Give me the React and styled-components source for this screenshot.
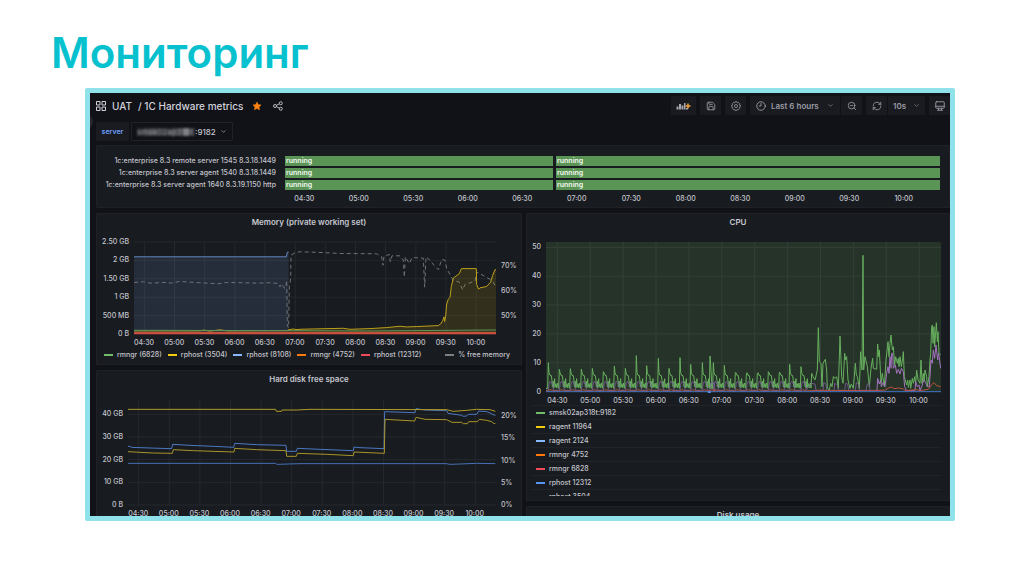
import React from "react";
import styled, { createGlobalStyle } from "styled-components";
import { ChevronDown, RefreshCw, Save, ZoomOut } from "lucide-react";

const GlobalStyle = createGlobalStyle`
  * { box-sizing: border-box; }
  body { margin: 0; background: #fff; font-family: Inter, "Liberation Sans", sans-serif; }
  button, select { font: inherit; color: inherit; }
`;

const Slide = styled.main`
  padding: 31px 69px 40px 85px;
`;

const SlideTitle = styled.h1`
  margin: 0 0 13px -34px;
  font-size: 42px;
  line-height: 44px;
  font-weight: 600;
  color: #08c1cf;
`;

const Frame = styled.section`
  position: relative;
  aspect-ratio: 870 / 433;
  overflow: hidden;
  border: 5px solid #8fe2ea;
  border-radius: 2px;
  background: #111217;
  color: #c3c4cd;
  padding: 3px 0 0 6px;
  font-size: 7px;
  font-weight: 500;
  line-height: 10px;
`;

const MenuToggle = styled.button`
  position: absolute;
  left: -14px;
  top: 20px;
  width: 17px;
  height: 17px;
  padding: 0;
  border: 0;
  border-radius: 50%;
  background: #25272d;
`;

const Toolbar = styled.header`
  display: flex;
  align-items: center;
  height: 19px;
  gap: 4px;
`;

const Breadcrumb = styled.nav`
  display: flex;
  align-items: center;
  gap: 6px;
  margin-right: auto;
  font-size: 10px;
  color: #d0d1da;
  a { color: inherit; text-decoration: none; }
`;

const IconButton = styled.button`
  display: flex;
  align-items: center;
  justify-content: center;
  padding: 0;
  border: 0;
  background: none;
  color: #b9bac3;
  margin-left: ${(p) => p.$space || 0}px;
`;

const ToolGroup = styled.div`
  display: flex;
  height: 19px;
  gap: 1px;
`;

const ToolButton = styled.button`
  display: flex;
  align-items: center;
  justify-content: ${(p) => (p.$start ? "flex-start" : "center")};
  gap: 5px;
  width: ${(p) => p.$width || 21}px;
  height: 19px;
  padding: 0 ${(p) => (p.$start ? 6 : 0)}px;
  border: 0;
  border-radius: 1px;
  background: #191b20;
  color: #9b9ca5;
  font-size: 8px;
  font-weight: 600;
  white-space: nowrap;
  svg:last-child:not(:first-child) { margin-left: auto; }
`;

const SelectBox = styled.label`
  display: flex;
  align-items: center;
  height: 19px;
  padding: 0 5px;
  border: ${(p) => (p.$outlined ? "1px solid #202228" : "0")};
  border-radius: 1px;
  background: ${(p) => (p.$outlined ? "#111217" : "#191b20")};
  color: ${(p) => (p.$outlined ? "#c3c4cd" : "#9b9ca5")};
  font-size: 8px;
  font-weight: ${(p) => (p.$outlined ? 500 : 600)};
  select {
    appearance: none;
    border: 0;
    padding: 0;
    margin: 0 3px 0 0;
    background: transparent;
    width: ${(p) => p.$width}px;
  }
`;

const Variables = styled.div`
  display: flex;
  gap: 2px;
  margin: 7px 0 4px;
`;

const VariableName = styled.span`
  display: flex;
  align-items: center;
  justify-content: center;
  width: 33px;
  height: 19px;
  background: #191b20;
  color: #6e9fff;
  font-weight: 600;
`;

const Hidden = styled.span`
  width: 58px;
  filter: blur(1px);
  color: #96979e;
  background: linear-gradient(90deg, #24262b 0 12%, #38393e 12% 36%, #2a2c31 36% 60%, #3c3d42 60% 80%, #707176 80% 90%, #36373c 90%);
  line-height: 8px;
  height: 8px;
  white-space: nowrap;
`;

const Panel = styled.section`
  border: 1px solid #1f2126;
  border-radius: 1px;
  background: #181b1f;
  padding: 2px 0 ${(p) => p.$bottom || 0}px;
  overflow: hidden;
`;

const PanelTitle = styled.h2`
  margin: 0 0 13px;
  font-size: 8px;
  line-height: 13px;
  font-weight: 600;
  text-align: center;
  color: #c6c7d0;
`;

const Columns = styled.div`
  display: grid;
  grid-template-columns: 426fr 424fr;
  gap: 4px;
  margin-top: 5px;
`;

const Column = styled.div`
  display: flex;
  flex-direction: column;
  gap: 5px;
  min-width: 0;
`;

const StatePanel = styled(Panel)`
  padding: 10px 9px 3px 4px;
`;

const StateGrid = styled.div`
  display: grid;
  grid-template-columns: 184px 1fr;
`;

const StateRows = styled.div`
  display: flex;
  flex-direction: column;
  gap: 2px;
  min-width: 0;
`;

const StateName = styled.span`
  display: flex;
  justify-content: flex-end;
  height: 10px;
  padding-right: 9px;
  white-space: nowrap;
`;

const StateBar = styled.div`
  display: grid;
  grid-template-columns: 268fr 384fr;
  gap: 3px;
  height: 10px;
  span {
    background: #5a9556;
    color: #f4f8f3;
    font-weight: 600;
    padding-left: 1px;
  }
`;

const PlotRow = styled.div`
  display: grid;
  grid-template-columns: ${(p) => p.$left}px 1fr ${(p) => p.$right}px;
  height: ${(p) => p.$height}px;
`;

const Axis = styled.div`
  display: flex;
  flex-direction: column;
  justify-content: space-between;
  margin: ${(p) => p.$top}px 0 ${(p) => p.$bottom}px;
  padding: 0 5px;
  text-align: ${(p) => p.$align || "right"};
  white-space: nowrap;
`;

const Plot = styled.svg`
  display: block;
  width: 100%;
  height: 100%;
  min-width: 0;
  overflow: visible;
  path, polyline, polygon { vector-effect: non-scaling-stroke; }
`;

const Times = styled.div`
  display: grid;
  grid-template-columns: repeat(12, 1fr);
  margin: 4px ${(p) => p.$right}px 0 ${(p) => p.$left}px;
  span { display: flex; justify-content: center; min-width: 0; }
`;

const Legend = styled.ul`
  display: flex;
  gap: 6px;
  list-style: none;
  margin: 2px 11px 0 7px;
  padding: 0;
  white-space: nowrap;
`;

const LegendItem = styled.li`
  display: flex;
  align-items: center;
  gap: 4px;
  &:last-child { margin-left: auto; }
`;

const Swatch = styled.i`
  width: 9px;
  height: 2px;
  background: ${(p) => p.$color};
`;

const LegendTable = styled.table`
  width: 100%;
  border-collapse: separate;
  border-spacing: 0;
  td {
    height: 14px;
    padding: 0 0 0 4px;
    border-top: 1px solid #202328;
  }
  div { display: flex; align-items: center; gap: 4px; }
`;

const LegendScroll = styled.div`
  height: 91px;
  margin: -1px 7px 0 5px;
  overflow: hidden;
`;

const TIMES = ["04:30", "05:00", "05:30", "06:00", "06:30", "07:00", "07:30", "08:00", "08:30", "09:00", "09:30", "10:00"];
const GREEN = "#73bf69";
const YELLOW = "#f2cc0c";
const BLUE = "#8ab8ff";
const ORANGE = "#ff780a";
const RED = "#f2495c";
const DEEP_BLUE = "#5794f2";
const PURPLE = "#b877d9";

function TimeAxis({ left, right }) {
  return <Times $left={left} $right={right}>{TIMES.map((t) => <span key={t}>{t}</span>)}</Times>;
}

function GridLines({ first, step, width, height, rows, color = "#25282d" }) {
  const columns = TIMES.map((_, i) => `M${first + i * step} 0V${height}`).join("");
  const lines = rows.map((y) => `M0 ${y}H${width}`).join("");
  return <path d={columns + lines} stroke={color} fill="none" />;
}

const MEMORY_YELLOW = "-37,357 -20,354 -12,356 0,355 40,354 130,352 150,355 210,353 260,350 300,346 320,348 350,347 415,344 422,339 428,330 432,318 434,332 437,315 440,280 445,266 450,260 454,228 460,203 478,190 484,175 529,175 530,222 536,236 540,232 560,228 572,215 578,195 585,178 588,178";
const MEMORY_FREE = "-498,216 -470,214 -450,218 -400,216 -385,218 -362,213 -330,215 -300,217 -246,220 -220,216 -170,217 -130,218 -90,217 -65,219 -60,229 -55,220 -48,232 -43,233 -40,210 -38,345 -34,350 -32,230 -28,205 -27,135 -15,128 0,125 60,127 120,130 230,131 245,140 249,165 252,138 268,133 271,155 276,137 300,137 310,150 313,200 316,140 328,160 336,142 370,144 374,230 378,140 390,150 402,165 415,178 425,148 435,150 440,175 460,210 478,215 488,238 495,222 525,212 530,185 555,198 570,207 580,215 588,232";

function MemoryPlot() {
  return (
    <Plot viewBox="0 0 1086 273" preserveAspectRatio="none" role="img" aria-label="Memory usage by process">
      <GridLines first={31} step={90.5} width={1086} height={273} rows={[0, 54.6, 109.2, 163.8, 218.4, 273]} />
      <g transform="translate(498 -96)" fill="none">
        <polygon points="-498,140 -41,140 -38,126 -34,126 -34,369 -498,369" fill="#8ab8ff" fillOpacity=".12" />
        <polyline points="-498,140 -41,140 -38,126 -34,126" stroke="#6488c0" />
        <polyline points={MEMORY_FREE} stroke="#707277" strokeDasharray="4 3" />
        <polygon points={`-37,369 ${MEMORY_YELLOW} 588,369`} fill={YELLOW} fillOpacity=".12" />
        <polyline points="-498,360 -300,360 -290,357 -270,361 -240,356 -220,360 -37,359" stroke="#9d8525" />
        <polyline points={MEMORY_YELLOW} stroke="#bda01a" />
        <polyline points="-498,358 -37,359 200,360 470,358 588,357" stroke="#5f9757" />
        <polyline points="-498,364 588,364" stroke="#b3742d" />
        <polyline points="-498,367 588,367" stroke="#cf4c40" strokeWidth="2" />
      </g>
    </Plot>
  );
}

function DiskPlot() {
  return (
    <Plot viewBox="0 0 1104 318" preserveAspectRatio="none" role="img" aria-label="Hard disk free space">
      <GridLines first={32} step={91.8} width={1104} height={318} rows={[46, 114, 182, 250, 318]} />
      <g transform="translate(516 -102)" fill="none">
        <polyline stroke="#4670b5" points="-516,295 -73,295 -70,298 -35,297 0,296 438,296 450,298 480,297 530,295 586,296" />
        <polyline stroke="#4c78c2" points="-516,244 -510,244 -506,247 -450,249 -385,251 -382,238 -330,241 -260,244 -199,247 -196,235 -130,239 -42,241 -40,259 -11,259 -8,250 60,253 160,257 162,246 180,248 252,251 254,140 345,143 348,131 375,135 440,137 444,145 485,151 490,154 500,153 505,148 530,148 536,138 560,140 570,144 582,150 586,151" />
        <polyline stroke="#a99428" points="-516,260 -480,262 -440,264 -383,265 -380,254 -320,257 -198,261 -196,250 -130,254 -42,257 -40,274 -11,274 -8,265 80,268 160,272 162,261 253,265 255,163 344,168 348,157 375,163 440,164 456,172 485,172 490,176 502,176 506,170 532,170 538,163 560,166 575,170 581,175 586,176" />
        <polyline stroke="#b09a2b" points="-516,133 -73,133 -71,139 -56,139 -54,135 -10,135 30,133 440,134 460,139 500,136 530,133 570,134 586,139" />
      </g>
    </Plot>
  );
}

/* Regular load bursts, each a sharp peak, a short plateau and a few ripples. */
const BURSTS = [
  [-575, 458], [-542, 478], [-509, 476], [-476, 477], [-443, 475], [-410, 485], [-377, 468], [-344, 475],
  [-311, 437], [-280, 467], [-245, 445], [-213, 475], [-180, 443], [-148, 463], [-113, 458], [-90, 438],
  [-80, 458], [-47, 466], [-14, 488], [19, 495], [52, 490], [85, 485], [118, 487], [149, 463], [183, 470],
];
const burst = (x, peak) =>
  `${x - 2},535 ${x},${peak} ${x + 2},488 ${x + 5},496 ${x + 9},497 ${x + 11},512 ${x + 12},530 ${x + 15},514 ${x + 16},534 ${x + 19},506 ${x + 20},532 ${x + 23},521 ${x + 25},533 ${x + 28},519 ${x + 30},534`;
const shortBurst = (x, peak) => `${x - 2},535 ${x},${peak} ${x + 3},480 ${x + 6},535`;
const CPU_GREEN =
  "-582,536 " +
  BURSTS.map(([x, p]) => (x === -90 ? shortBurst(x, p) : burst(x, p))).join(" ") +
  " 215,490 219,500 225,510 232,480 235,353 238,455 243,460 246,530 249,460 256,448 260,480 262,535 268,540 272,520 276,530 280,500 286,505 290,500 295,535 300,378 305,500 309,520 314,430 317,450 320,440 324,510 330,535 334,522 340,535 346,460 349,495 352,500 358,535 362,425 366,480 369,136 371,480 375,440 382,470 388,530 393,475 398,445 400,475 410,478 413,402 416,440 418,420 423,520 427,490 433,530 438,450 444,395 447,440 450,400 453,375 457,420 460,410 464,465 467,440 472,460 475,445 477,470 480,440 484,470 488,445 490,425 493,500 500,525 503,510 505,532 510,510 512,535 517,505 520,520 524,500 527,520 530,480 534,510 540,520 543,450 546,520 550,490 552,515 555,480 560,500 562,530 567,500 570,450 572,430 575,350 577,345 579,400 582,350 584,410 589,338 592,395 594,365 597,430 602,435";
const CPU_PURPLE =
  "-582,541 " +
  BURSTS.map(([x]) => `${x},541 ${x + 3},517 ${x + 7},514 ${x + 9},520 ${x + 13},519 ${x + 15},541`).join(" ") +
  " 215,520 225,522 228,541 249,541 251,518 258,522 260,541 282,541 284,520 292,524 295,541 314,541 317,520 323,522 326,541 346,541 349,518 356,522 358,541 378,541 382,522 388,520 390,541 411,541";
const CPU_PURPLE_LATE =
  "411,541 413,505 418,522 422,510 424,530 429,518 435,530 440,490 444,470 447,490 450,440 453,475 455,430 458,430 460,475 466,465 470,490 475,478 480,492 484,475 490,485 494,530 500,542 525,542 527,515 532,530 537,525 540,541 547,525 550,510 556,515 562,530 568,530 573,450 577,460 580,420 584,445 588,405 593,450 596,430 602,475";
const CPU_RED =
  "-582,542 " +
  BURSTS.map(([x]) => `${x},543 ${x + 5},539 ${x + 12},541 ${x + 16},543`).join(" ") +
  " 230,541 400,542 436,540 445,534 455,531 462,536 475,534 490,537 495,542 530,539 540,542 565,538 575,524 582,518 590,527 602,530";

function CpuPlot() {
  return (
    <Plot viewBox="0 0 1185 450" preserveAspectRatio="none" role="img" aria-label="CPU load by process">
      <path d="M0 0H1185V450H0Z" fill="#263328" />
      <GridLines first={34} step={98.7} width={1185} height={450} rows={[16, 102.6, 189.2, 275.8, 362.4, 449]} color="#334036" />
      <g transform="translate(582 -96)" fill="none" strokeLinejoin="bevel">
        <polyline points={CPU_GREEN} stroke="#67b05e" />
        <polyline points={CPU_PURPLE} stroke="#80619f" strokeOpacity=".8" />
        <polyline points={CPU_PURPLE_LATE} stroke="#a274bd" />
        <polyline points={CPU_RED} stroke="#b9523c" />
        <polyline points="-582,545 603,545" stroke="#3f6fc4" />
        <path d="M-92 544v5" stroke={DEEP_BLUE} strokeWidth="3" />
      </g>
    </Plot>
  );
}

function GridIcon() {
  return (
    <svg width="10" height="10" viewBox="0 0 20 20" fill="none" stroke="currentColor" strokeWidth="2" aria-hidden="true">
      <path d="M1 1h7v7H1zM12 1h7v7h-7zM1 12h7v7H1zM12 12h7v7h-7z" />
    </svg>
  );
}

function StarIcon() {
  return (
    <svg width="10" height="10" viewBox="0 0 20 20" aria-hidden="true">
      <path d="M10 2l2.500 5.200 5.700.8-4.100 4 1 5.700L10 15l-5.100 2.700 1-5.700L1.800 8l5.700-.8z" fill="#ff8213" stroke="#ff8213" strokeLinejoin="round" />
    </svg>
  );
}

function ShareIcon() {
  return (
    <svg width="10" height="10" viewBox="0 0 20 20" fill="none" stroke="currentColor" strokeWidth="2" aria-hidden="true">
      <circle cx="4" cy="10" r="3" />
      <circle cx="15.500" cy="4.500" r="3" />
      <circle cx="15.500" cy="15.500" r="3" />
      <path d="M6.700 8.700l6-3M6.700 11.300l6 3" />
    </svg>
  );
}

function AddPanelIcon() {
  return (
    <svg width="15" height="10" viewBox="0 0 30 20" aria-hidden="true">
      <path d="M1 11h4v6H1zM6 6h4v11H6zM11 9h4v8h-4zM16 4h3v13h-3zM20 14h4v3h-4z" fill="#a6a7ae" />
      <path d="M24 5v10M19 10h10" stroke="#f9a13a" strokeWidth="3" />
    </svg>
  );
}

function GearIcon() {
  return (
    <svg width="10" height="10" viewBox="0 0 20 20" fill="none" stroke="currentColor" strokeWidth="1.600" strokeLinejoin="round" aria-hidden="true">
      <path d="M8 1.500h4l.7 2.300 2.200-1.100 2.500 2.500-1.100 2.200 2.300.7v4l-2.300.7 1.100 2.200-2.500 2.500-2.200-1.100-.7 2.300H8l-.7-2.300-2.200 1.100-2.500-2.500 1.100-2.200-2.300-.7v-4l2.300-.7-1.100-2.200 2.500-2.500 2.200 1.100z" />
      <circle cx="10" cy="10" r="3" />
    </svg>
  );
}

function ClockIcon() {
  return (
    <svg width="10" height="10" viewBox="0 0 20 20" fill="none" stroke="currentColor" strokeWidth="1.800" strokeLinecap="round" aria-hidden="true">
      <circle cx="10" cy="10" r="8.500" />
      <path d="M10 5v5H6.500" />
    </svg>
  );
}

function KioskIcon() {
  return (
    <svg width="10" height="10" viewBox="0 0 20 20" fill="none" stroke="currentColor" strokeWidth="1.800" strokeLinejoin="round" strokeLinecap="round" aria-hidden="true">
      <path d="M3 1.500h14a1.500 1.500 0 0 1 1.500 1.500v10a1.500 1.500 0 0 1-1.500 1.500H3A1.500 1.500 0 0 1 1.500 13V3A1.500 1.500 0 0 1 3 1.500zM1.500 10.500h17M7 14.500V18M13 14.500V18M5 18.500h10" />
    </svg>
  );
}

const SERVICES = [
  "1c:enterprise 8.3 remote server 1545 8.3.18.1449",
  "1c:enterprise 8.3 server agent 1540 8.3.18.1449",
  "1c:enterprise 8.3 server agent 1640 8.3.19.1150 http",
];

const MEMORY_LEGEND = [
  ["rmngr (6828)", GREEN],
  ["rphost (3504)", YELLOW],
  ["rphost (8108)", BLUE],
  ["rmngr (4752)", ORANGE],
  ["rphost (12312)", RED],
  ["% free memory", "#808080"],
];

const CPU_LEGEND = [
  ["smsk02ap318t:9182", GREEN],
  ["ragent 11964", YELLOW],
  ["ragent 2124", BLUE],
  ["rmngr 4752", ORANGE],
  ["rmngr 6828", RED],
  ["rphost 12312", DEEP_BLUE],
  ["rphost 3504", PURPLE],
];

export default function App() {
  return (
    <Slide>
      <GlobalStyle />
      <SlideTitle>Мониторинг</SlideTitle>
      <Frame>
        <MenuToggle aria-label="Open menu" />
        <Toolbar>
          <Breadcrumb>
            <GridIcon />
            <a href="#uat">UAT</a>
            <a href="#dashboard">/ 1C Hardware metrics</a>
            <IconButton aria-label="Mark as favorite" $space={3}><StarIcon /></IconButton>
            <IconButton aria-label="Share" $space={5}><ShareIcon /></IconButton>
          </Breadcrumb>
          <ToolButton $width={25} aria-label="Add panel"><AddPanelIcon /></ToolButton>
          <ToolButton aria-label="Save"><Save size={10} /></ToolButton>
          <ToolButton aria-label="Settings"><GearIcon /></ToolButton>
          <ToolGroup>
            <ToolButton $width={90} $start><ClockIcon />Last 6 hours<ChevronDown size={7} /></ToolButton>
            <ToolButton aria-label="Zoom out"><ZoomOut size={10} /></ToolButton>
          </ToolGroup>
          <ToolGroup>
            <ToolButton aria-label="Refresh"><RefreshCw size={10} /></ToolButton>
            <SelectBox $width={17}>
              <select aria-label="Refresh interval" defaultValue="10s"><option>10s</option></select>
              <ChevronDown size={7} />
            </SelectBox>
          </ToolGroup>
          <ToolButton aria-label="Kiosk mode"><KioskIcon /></ToolButton>
        </Toolbar>

        <Variables>
          <VariableName id="server-name">server</VariableName>
          <SelectBox $outlined $width={22}>
            <Hidden aria-hidden="true">smsk02ap318t</Hidden>
            <select aria-labelledby="server-name" defaultValue=":9182"><option>:9182</option></select>
            <ChevronDown size={7} />
          </SelectBox>
        </Variables>

        <StatePanel>
          <StateGrid>
            <StateRows>{SERVICES.map((s) => <StateName key={s}>{s}</StateName>)}</StateRows>
            <div>
              <StateRows>
                {SERVICES.map((s) => <StateBar key={s}><span>running</span><span>running</span></StateBar>)}
              </StateRows>
              <TimeAxis left={-8} right={9} />
            </div>
          </StateGrid>
        </StatePanel>

        <Columns>
          <Column>
            <Panel $bottom={4}>
              <PanelTitle>Memory (private working set)</PanelTitle>
              <PlotRow $left={37} $right={25} $height={92}>
                <Axis $top={-5} $bottom={-5}>
                  {["2.50 GB", "2 GB", "1.50 GB", "1 GB", "500 MB", "0 B"].map((t) => <span key={t}>{t}</span>)}
                </Axis>
                <MemoryPlot />
                <Axis $top={19} $bottom={13} $align="left">
                  {["70%", "60%", "50%"].map((t) => <span key={t}>{t}</span>)}
                </Axis>
              </PlotRow>
              <TimeAxis left={32} right={30} />
              <Legend>
                {MEMORY_LEGEND.map(([name, color]) => (
                  <LegendItem key={name}><Swatch $color={color} />{name}</LegendItem>
                ))}
              </Legend>
            </Panel>
            <Panel>
              <PanelTitle>Hard disk free space</PanelTitle>
              <PlotRow $left={31} $right={25} $height={106}>
                <Axis $top={10} $bottom={-5}>
                  {["40 GB", "30 GB", "20 GB", "10 GB", "0 B"].map((t) => <span key={t}>{t}</span>)}
                </Axis>
                <DiskPlot />
                <Axis $top={12} $bottom={-5} $align="left">
                  {["20%", "15%", "10%", "5%", "0%"].map((t) => <span key={t}>{t}</span>)}
                </Axis>
              </PlotRow>
              <TimeAxis left={26} right={31} />
            </Panel>
          </Column>
          <Column>
            <Panel $bottom={4}>
              <PanelTitle>CPU</PanelTitle>
              <PlotRow $left={19} $right={8} $height={150}>
                <Axis $top={0} $bottom={-5}>
                  {["50", "40", "30", "20", "10", "0"].map((t) => <span key={t}>{t}</span>)}
                </Axis>
                <CpuPlot />
              </PlotRow>
              <TimeAxis left={14} right={14} />
              <LegendScroll>
                <LegendTable>
                  <tbody>
                    {CPU_LEGEND.map(([name, color]) => (
                      <tr key={name}><td><div><Swatch $color={color} />{name}</div></td></tr>
                    ))}
                  </tbody>
                </LegendTable>
              </LegendScroll>
            </Panel>
            <Panel>
              <PanelTitle>Disk usage</PanelTitle>
            </Panel>
          </Column>
        </Columns>
      </Frame>
    </Slide>
  );
}
